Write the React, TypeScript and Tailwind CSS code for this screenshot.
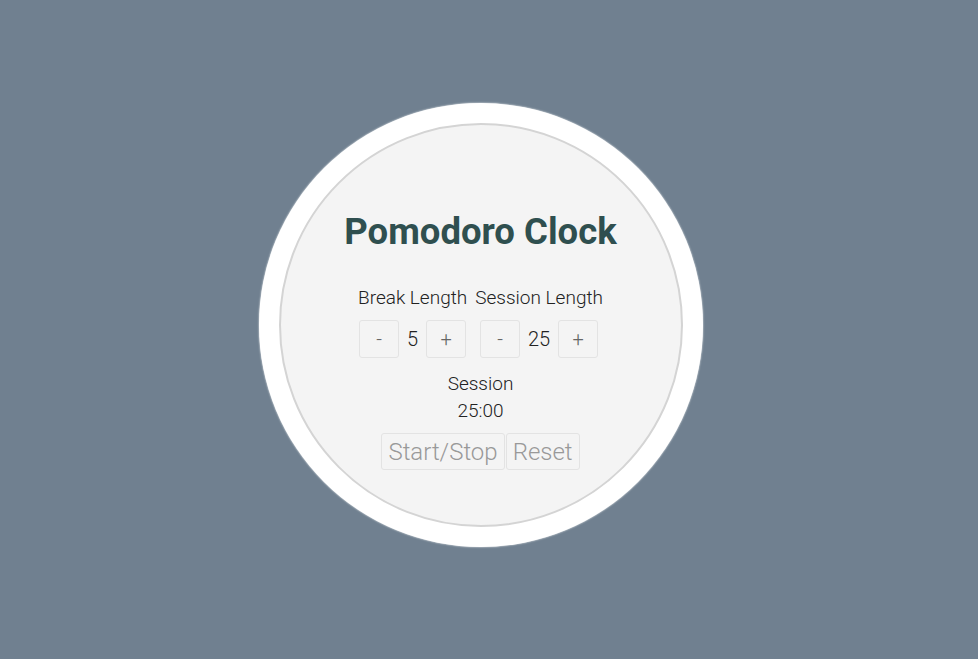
import { useState } from 'react'

const font = { fontFamily: 'Roboto, "Noto Sans", sans-serif' }

function Stepper({ label, value, onDown, onUp }: { label: string; value: number; onDown: () => void; onUp: () => void }) {
  return (
    <div className="flex flex-col items-center">
      <div className="text-[19px] font-light leading-6 text-[#222]">{label}</div>
      <div className="mt-[10px] flex items-center">
        <button
          onClick={onDown}
          className="flex h-[38px] w-10 items-center justify-center rounded-[3px] border border-[#e3e3e3] text-[20px] font-light text-[#666]"
        >
          -
        </button>
        <span className="px-[8px] text-[20px] font-light text-[#222]">{value}</span>
        <button
          onClick={onUp}
          className="flex h-[38px] w-10 items-center justify-center rounded-[3px] border border-[#e3e3e3] text-[20px] font-light text-[#666]"
        >
          +
        </button>
      </div>
    </div>
  )
}

export default function App() {
  const [breakLen, setBreakLen] = useState(5)
  const [sessionLen, setSessionLen] = useState(25)

  return (
    <div className="min-h-screen w-full bg-[#708090]" style={font}>
      <div className="flex w-[961px] justify-center pt-[103px]">
        {/* outer white ring */}
        <div className="h-[444px] w-[444px] rounded-full bg-white p-[20px] shadow-[0_0_2px_#fff]">
          <div className="flex h-full w-full flex-col items-center rounded-full border-2 border-[#d4d4d4] bg-[#f4f4f4]">
            <h1 className="mt-[83px] text-[36.5px] font-bold leading-[48px] text-[#2f4f4f]">Pomodoro Clock</h1>

            <div className="mt-[30px] flex gap-2">
              <Stepper
                label="Break Length"
                value={breakLen}
                onDown={() => setBreakLen(Math.max(1, breakLen - 1))}
                onUp={() => setBreakLen(Math.min(60, breakLen + 1))}
              />
              <Stepper
                label="Session Length"
                value={sessionLen}
                onDown={() => setSessionLen(Math.max(1, sessionLen - 1))}
                onUp={() => setSessionLen(Math.min(60, sessionLen + 1))}
              />
            </div>

            <div className="mt-[12px] text-[19px] font-light leading-[27px] text-[#222]">Session</div>
            <div className="text-[19px] font-light leading-[27px] text-[#222]">
              {String(sessionLen).padStart(2, '0')}:00
            </div>

            <div className="mt-[9px] flex gap-px">
              <button className="h-[37px] rounded-[3px] border border-[#e3e3e3] px-[6px] text-[24px] font-light leading-none text-[#999]">
                Start/Stop
              </button>
              <button className="h-[37px] rounded-[3px] border border-[#e3e3e3] px-[6px] text-[24px] font-light leading-none text-[#999]">
                Reset
              </button>
            </div>
          </div>
        </div>
      </div>
    </div>
  )
}
